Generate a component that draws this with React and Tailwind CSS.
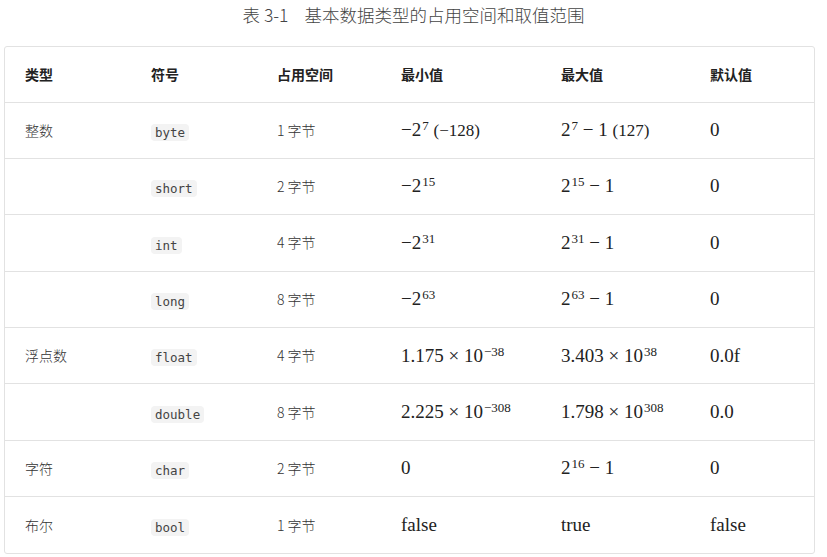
const sans = "font-['Noto_Sans_CJK_SC','Noto_Sans',sans-serif]";
const mono = "font-['DejaVu_Sans_Mono','Liberation_Mono',monospace]";
const serif = "font-['Liberation_Serif','DejaVu_Serif',serif]";

function Code({ children }) {
  return (
    <code className={`${mono} text-[12.5px] text-[#444] bg-[#f3f3f3] rounded px-[4px] py-[1px]`}>
      {children}
    </code>
  );
}

function M({ children }) {
  return <span className={`${serif} text-[19px] text-[#222]`}>{children}</span>;
}

function Pow({ b, e }) {
  return (
    <>
      {b}
      <sup className="text-[13px] relative top-[-0.45em] ml-[1px]">{e}</sup>
    </>
  );
}

const rows = [
  ["整数", "byte", "1 字节", <M>−<Pow b="2" e="7" /> <span className="text-[17px]">(−128)</span></M>, <M><Pow b="2" e="7" /> − 1 <span className="text-[17px]">(127)</span></M>, <M>0</M>],
  ["", "short", "2 字节", <M>−<Pow b="2" e="15" /></M>, <M><Pow b="2" e="15" /> − 1</M>, <M>0</M>],
  ["", "int", "4 字节", <M>−<Pow b="2" e="31" /></M>, <M><Pow b="2" e="31" /> − 1</M>, <M>0</M>],
  ["", "long", "8 字节", <M>−<Pow b="2" e="63" /></M>, <M><Pow b="2" e="63" /> − 1</M>, <M>0</M>],
  ["浮点数", "float", "4 字节", <M>1.175 × <Pow b="10" e="−38" /></M>, <M>3.403 × <Pow b="10" e="38" /></M>, <M>0.0f</M>],
  ["", "double", "8 字节", <M>2.225 × <Pow b="10" e="−308" /></M>, <M>1.798 × <Pow b="10" e="308" /></M>, <M>0.0</M>],
  ["字符", "char", "2 字节", <M>0</M>, <M><Pow b="2" e="16" /> − 1</M>, <M>0</M>],
  ["布尔", "bool", "1 字节", <M>false</M>, <M>true</M>, <M>false</M>],
];

const heads = ["类型", "符号", "占用空间", "最小值", "最大值", "默认值"];
const widths = ["w-[126px]", "w-[126px]", "w-[124px]", "w-[160px]", "w-[149px]", "w-[125px]"];

export default function App() {
  return (
    <div className={`${sans} bg-white w-[827px] h-[557px] overflow-hidden text-[#444]`}>
      <div className="h-[31px] flex items-center justify-center text-[17.5px] font-light text-[#444]">
        <span>表 3-1</span>
        <span className="ml-[16px]">基本数据类型的占用空间和取值范围</span>
      </div>
      <div className="ml-[4px] mt-[15px] w-[811px] border border-[#e2e2e2] rounded-[3px] overflow-hidden">
        <table className="w-full table-fixed border-collapse">
          <thead>
            <tr className="h-[55px]">
              {heads.map((h, i) => (
                <th key={h} className={`${widths[i]} text-left pl-[20px] text-[14px] font-bold text-[#222]`}>
                  {h}
                </th>
              ))}
            </tr>
          </thead>
          <tbody>
            {rows.map((r, i) => (
              <tr key={i} className="h-[56.4px] border-t border-[#e2e2e2]">
                <td className="pl-[20px] text-[14px] font-light text-[#333]">{r[0]}</td>
                <td className="pl-[20px]"><Code>{r[1]}</Code></td>
                <td className="pl-[20px] text-[14px] font-light text-[#333]">{r[2]}</td>
                <td className="pl-[20px] whitespace-nowrap">{r[3]}</td>
                <td className="pl-[20px] whitespace-nowrap">{r[4]}</td>
                <td className="pl-[20px] whitespace-nowrap">{r[5]}</td>
              </tr>
            ))}
          </tbody>
        </table>
      </div>
    </div>
  );
}
